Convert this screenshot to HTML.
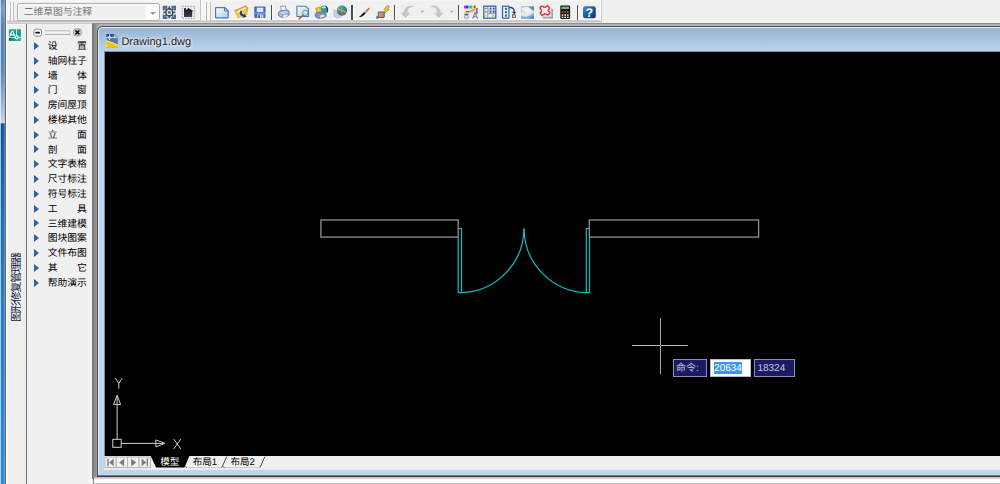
<!DOCTYPE html>
<html lang="zh-CN">
<head>
<meta charset="utf-8">
<title>Drawing1.dwg</title>
<style>
html,body{margin:0;padding:0;}
body{width:1000px;height:484px;overflow:hidden;position:relative;background:#f0f0f0;
 font-family:"Liberation Sans","Noto Sans CJK SC",sans-serif;text-rendering:geometricPrecision;}
.abs{position:absolute;}
#lstrip{left:0;top:0;width:5px;height:484px;background:linear-gradient(#5a84bd,#4f83c2 40%,#2c88ce);}
#lstrip i{position:absolute;left:0;top:0;width:1px;height:484px;background:#b4c8e2;}
#lstrip b{position:absolute;left:4px;top:0;width:1.4px;height:484px;background:#3c4a66;opacity:.85;}
/* toolbar */
#tb{left:5px;top:0;width:597px;height:20px;background:linear-gradient(#f7f7f7,#f1f1f1 2px,#f0f0f0 3px,#f0f0f0 18px,#f6f6f6 19px,#f9f9f9 20px);}
#tbl1{left:5px;top:20px;width:597px;height:2px;background:linear-gradient(#cdcdcd,#cdcdcd 1px,#c6c6c6 1px);}
#tbl2{left:5px;top:22px;width:597px;height:3px;background:linear-gradient(#dcdcdc,#dcdcdc 1px,#cbcbcb 1px,#cbcbcb 2px,#f7f7f7 2px);}
.grip{top:1.500px;width:1px;height:19.500px;background:#bdbdbd;box-shadow:-1.500px 0 0 #fdfdfd;}
.sep{top:5px;width:1.300px;height:14.500px;background:#4e4e4e;box-shadow:1.200px 0 0 #fbfbfb;}
#combo{left:16.500px;top:3.300px;width:143.300px;height:17.900px;box-sizing:border-box;border:1px solid #adadad;border-radius:2.500px;background:linear-gradient(90deg,#f0f0f0 127.300px,#fff 128.300px);box-shadow:inset 0 0 0 1px #fbfbfb;}
#combo span{position:absolute;left:6.300px;top:1.900px;font-size:9.9px;line-height:13px;color:#767676;white-space:nowrap;letter-spacing:-0.15px;}
#combo i{position:absolute;left:132.900px;top:7.300px;width:0;height:0;border-left:3.200px solid transparent;border-right:3.200px solid transparent;border-top:3.800px solid #999;}
/* palette */
#pline{left:26px;top:24px;width:1px;height:460px;background:#6f6f6f;}
#menu{left:27px;top:24px;width:65px;height:460px;background:linear-gradient(90deg,#f0f0f0 61px,#f6f6f6 63px);}
.mi{position:absolute;left:0;width:65px;height:14px;font-size:9.800px;line-height:14px;color:#000;white-space:nowrap;}
.mi s{position:absolute;left:7.300px;top:1.800px;width:0;height:0;border-top:4px solid transparent;border-bottom:4px solid transparent;border-left:5.200px solid #2f62a8;}
.mi span{position:absolute;left:20.700px;top:0;width:39px;text-align:justify;text-align-last:justify;}
/* mdi */
#gstrip{left:92px;top:23.500px;width:7px;height:455px;background:linear-gradient(90deg,#747474,#8a8a8a 2.500px,#a2a2a2 5px,#a2a2a2);}
#gtop{left:92px;top:22.600px;width:908px;height:4px;background:linear-gradient(#909090,#8c8c8c 25%,#b2b2b2 38%,#b4b4b4 60%,#a8a8a8 85%,#8a8a8a);}
#win{left:97px;top:26px;width:920px;height:450px;box-sizing:border-box;border:1px solid #4c5058;border-left-color:#484a4e;border-radius:6px 0 0 0;background:#c1d6ec;overflow:hidden;}
#wtitle{position:absolute;left:0;top:0;width:100%;height:25px;background:linear-gradient(#98b3d3,#a3bddb 35%,#b6ceE8 80%,#bdd4ec);}
#whl{position:absolute;left:0;top:0;width:100%;height:100%;box-sizing:border-box;border-left:1px solid #e4eefa;border-top:1px solid #e0e8f2;border-radius:5px 0 0 0;}
#wtext{left:121.400px;top:35.100px;font-size:11px;line-height:15px;color:#1a1a1a;white-space:nowrap;text-shadow:0 0 3px #fff,0 0 5px #fff;}
#black{left:104.5px;top:51.5px;width:900px;height:404.5px;background:#000;box-shadow:0 0 0 1px #7e8ea3;}
#tabbar{left:104.300px;top:456px;width:900px;height:12.5px;background:#f0f0f0;}
#tabhl{left:104.300px;top:468.5px;width:905px;height:1.5px;background:#e3ecf7;}
#teal{left:97.5px;top:474.6px;width:905px;height:1.5px;background:#1f9db6;}
#dk{left:97px;top:476px;width:910px;height:.6px;background:#3c3c3c;}
#cmdw{left:94px;top:476.600px;width:910px;height:6px;background:linear-gradient(#b4b4b4,#dcdcdc 1.700px,#fff 2.100px);}
#cmdg{left:93.5px;top:482.5px;width:910px;height:2px;background:#c2c2c2;}
#cmdl{left:93px;top:478px;width:1px;height:6px;background:#8a8a8a;}
#vtext{left:11.700px;top:322.400px;width:90px;height:11.600px;font-size:11.200px;line-height:11.600px;color:#16223f;white-space:nowrap;transform-origin:0 0;transform:rotate(-90deg);letter-spacing:-1.400px;}
svg{position:absolute;left:0;top:0;overflow:visible;}
.tabt{font-size:9.500px;line-height:12px;white-space:nowrap;color:#000;}
.dyn{top:359px;height:18px;box-sizing:border-box;font-size:10px;text-rendering:geometricPrecision;line-height:16px;white-space:nowrap;}
</style>
</head>
<body>
<div id="tb" class="abs"></div>
<div id="tbl1" class="abs"></div>
<div id="tbl2" class="abs"></div>
<svg id="lstrip2" width="8" height="484" viewBox="0 0 8 484">
<defs><linearGradient id="gStrip" x1="0" y1="0" x2="0" y2="484" gradientUnits="userSpaceOnUse">
<stop offset="0" stop-color="#5c84ba"/><stop offset=".02" stop-color="#7a9ac8"/><stop offset=".052" stop-color="#5a82b8"/><stop offset=".145" stop-color="#5a82b8"/>
<stop offset=".2" stop-color="#8faad0"/><stop offset=".252" stop-color="#c4d4e6"/><stop offset=".2545" stop-color="#c4d4e6"/><stop offset=".2555" stop-color="#14509a"/>
<stop offset=".41" stop-color="#1d66ae"/><stop offset=".62" stop-color="#2878c2"/><stop offset="1" stop-color="#2b8ad0"/></linearGradient></defs>
<rect x="0" y="0" width="5" height="484" fill="url(#gStrip)"/>
<rect x="0" y="0" width="1" height="484" fill="#ffffff" opacity=".62"/>
<rect x="3.800" y="0" width="1.100" height="484" fill="#ffffff" opacity=".32"/>
<rect x="4.800" y="0" width="1.200" height="484" fill="#5a6c84"/>
<rect x="6" y="0" width="1.200" height="484" fill="#ffffff"/>
</svg>

<!-- toolbar grips and combobox -->
<div class="abs grip" style="left:10px"></div>
<div class="abs grip" style="left:13px"></div>
<div id="combo" class="abs"><span>二维草图与注释</span><i></i></div>
<div class="abs" style="left:200.200px;top:0;width:1px;height:21px;background:#c4c4c4;box-shadow:1.500px 0 0 #fcfcfc;"></div>
<div class="abs grip" style="left:206.200px"></div>
<div class="abs grip" style="left:209.600px"></div>
<div class="abs" style="left:601px;top:0;width:1px;height:21px;background:#c9c9c9;box-shadow:-1px 0 0 #fff;"></div>
<div class="abs sep" style="left:270.8px"></div>
<div class="abs sep" style="left:351.4px"></div>
<div class="abs sep" style="left:393.8px"></div>
<div class="abs sep" style="left:458px"></div>
<div class="abs sep" style="left:576.8px"></div>

<!-- ICONS -->
<svg id="icons" width="1000" height="24" viewBox="0 0 1000 24">
<defs>
<linearGradient id="gNew" x1="0" y1="0" x2="1" y2="1"><stop offset="0" stop-color="#ffffff"/><stop offset="1" stop-color="#a9d0d6"/></linearGradient>
<linearGradient id="gHelp" x1="0" y1="0" x2="1" y2="1"><stop offset="0" stop-color="#4a86c4"/><stop offset=".5" stop-color="#215a9a"/><stop offset="1" stop-color="#0c3468"/></linearGradient>
<linearGradient id="gOr" x1="0" y1="0" x2="1" y2="1"><stop offset="0" stop-color="#ffa070"/><stop offset="1" stop-color="#e86a28"/></linearGradient>
<linearGradient id="gHouse" x1="0" y1="0" x2="0" y2="1"><stop offset="0" stop-color="#15181c"/><stop offset="1" stop-color="#3c4046"/></linearGradient>
<radialGradient id="gGlobe" cx="0.4" cy="0.35" r="0.7"><stop offset="0" stop-color="#58b0e8"/><stop offset="1" stop-color="#1c58a8"/></radialGradient>
</defs>
<!-- workspace gear -->
<g>
<path d="M162.7 5.8h4.6v2.1h-2.5v2.5h-2.1zM171.4 5.8h4.6v4.6h-2.1v-2.5h-2.5zM162.7 14.4h2.1v2.5h2.5v2.1h-4.6zM173.9 14.4h2.1v4.6h-4.6v-2.1h2.5z" fill="#40709f"/>
<g transform="translate(169.300 12.400)">
<g fill="#4a4c4f"><rect x="-.85" y="-6" width="1.700" height="2.600"/><rect x="-.85" y="3.400" width="1.700" height="2.600"/><rect x="-6" y="-.85" width="2.600" height="1.700"/><rect x="3.400" y="-.85" width="2.600" height="1.700"/>
<g transform="rotate(45)"><rect x="-.85" y="-5.800" width="1.700" height="2.400"/><rect x="-.85" y="3.400" width="1.700" height="2.400"/><rect x="-5.800" y="-.85" width="2.400" height="1.700"/><rect x="3.400" y="-.85" width="2.400" height="1.700"/></g></g>
<circle r="3.500" fill="#f4f6f8" stroke="#4a4c4f" stroke-width="1.600"/><circle r="1.700" fill="#4a7ab6"/>
</g>
</g>
<!-- home -->
<g>
<rect x="182.2" y="6.3" width="12.4" height="12.2" fill="#e9eef5" stroke="#8a93a3" stroke-width="0.9" stroke-dasharray="1.4 1.3"/>
<path d="M184 17V8.3h2v1.7l2.5-1.9L193.8 11.2h-1.6V17z" fill="url(#gHouse)"/>
</g>
<!-- new -->
<path d="M216.2 7.6h8.6l3.4 3.2v6.5a.6.6 0 0 1-.6.6h-11.4a.6.6 0 0 1-.6-.6v-9.100a.6.6 0 0 1 .6-.6z" fill="url(#gNew)" stroke="#4a79be" stroke-width="1.2"/>
<path d="M224.6 7.8v3.2h3.4" fill="none" stroke="#4a79be" stroke-width="1"/>
<!-- open -->
<g>
<path d="M234.300 10.200l4.200-1.800 7.500-3.100 2.300 2.700-1.300 6.500-9 3.800-1.700-3.800z" fill="#d7a52a"/>
<path d="M236.500 11.400l9-4.400.8 1.500-9 4.700z" fill="#f3f7fa"/>
<path d="M236.700 13.200l10.100-4.900-.5 6.300-8.300 3.700z" fill="#efc64a"/>
<path d="M240.800 10.600c-1.900 2.300-1 5 2 5.900l-.5 1.300 4.400-1.100-2.700-3.200-.4 1.200c-1.700-.6-2.500-2-1.400-3.700z" fill="#1b3c7a"/>
</g>
<!-- save -->
<g>
<rect x="254.300" y="6.600" width="11.200" height="11.400" rx="1" fill="#3f68c6"/>
<rect x="256.800" y="7.700" width="6.500" height="4.300" fill="#dce9f2"/>
<rect x="255.200" y="12.600" width="9.500" height="1.500" fill="#7f9fe2"/>
<rect x="257.300" y="14.600" width="6" height="3.400" fill="#e8ecf0"/>
<rect x="258.200" y="15.200" width="1.700" height="2.800" fill="#3a4a70"/>
<rect x="261.200" y="15.200" width="1.200" height="2.800" fill="#8a9a5a"/>
</g>
<!-- print -->
<g>
<path d="M280.600 6.400l4.600-.5 1.500 5.400-5.200 1z" fill="#f6f8fc" stroke="#6f7fb0" stroke-width="0.800"/>
<path d="M278.400 13c0-1.300 1.400-2.100 2.900-2.300l5.400-.8c1.500 0 2.500 1 2.500 2.300v2.100c0 1.100-1.100 1.900-2.300 2.100l-4.300.9c-2 .1-4.200-1.100-4.200-2.700z" fill="#8e9bc6" stroke="#5b6aa0" stroke-width="0.700"/>
<path d="M279 12.600l3.400 1.900 6.300-1.700-2-1.700-5.200.6z" fill="#c9d1e8"/>
<ellipse cx="285.300" cy="15.800" rx="2.500" ry="1.200" fill="#eef1f8" transform="rotate(-14 285.300 15.800)"/>
<path d="M279.300 14.600l2.800 1.700" stroke="#dfe4f2" stroke-width="0.800"/>
</g>
<!-- preview -->
<g>
<path d="M296.900 6.200h8.800l2.800 2.600v7.700h-11.600z" fill="url(#gNew)" stroke="#4a79be" stroke-width="1.100"/>
<circle cx="305.200" cy="12.800" r="2.700" fill="#cfe4f8" stroke="#6f8fb8" stroke-width="1"/>
<path d="M303.400 15l-4.100 3.700" stroke="#b0651d" stroke-width="1.600" stroke-linecap="round"/>
</g>
<!-- publish -->
<g>
<circle cx="324.300" cy="9.300" r="3.700" fill="#2f9f9a"/>
<path d="M321.500 7.500c2-1.800 4.500-1.500 6 0-1 .6-2 1-3.200.6-1 .5-1.800.5-2.800-.6z" fill="#b9e6ef"/>
<path d="M325.500 6.200c2.200 1.400 2.800 4.200 1.400 6.300" stroke="#1d4048" stroke-width="1.200" fill="none"/>
<path d="M315.600 8.200l5-1.400 1.400 5.400-5 1.400z" fill="#e3b322" stroke="#b98d16" stroke-width="0.5"/>
<path d="M317.800 8.800l1.600 1.200-.8 1.400" stroke="#fff6c8" stroke-width="0.800" fill="none"/>
<path d="M315.200 14.400c0-1.400 1.500-2 3-2l5.400-.4c1.500 0 2.500.9 2.500 2.100v1.600c0 1.100-1.100 1.800-2.300 2l-4.300.7c-2 0-4.300-1-4.300-2.500z" fill="#8190bd" stroke="#56669c" stroke-width="0.700"/>
<ellipse cx="322" cy="16.200" rx="2.500" ry="1.200" fill="#e6eaf4" transform="rotate(-12 322 16.200)"/>
</g>
<!-- 3d dwf -->
<g>
<path d="M333.800 9.800l3.600 1.200v5l4.800-2.200 1 1.400-5.800 3.200-3.600-2.200z" fill="#c4d3ea" stroke="#9fb2d2" stroke-width="0.5"/>
<circle cx="342" cy="10.600" r="5" fill="url(#gGlobe)"/>
<path d="M339 7.400c1.600-.8 3.600-.2 4.200 1.200.6 1.600-.6 3.400-2.400 3.600-1.600.2-2.800-1-3-2.400z" fill="#37a565"/>
<path d="M343.500 12.500l2.500-1.200-.6 2.800-1.800 1z" fill="#37a565"/>
<path d="M337.400 8.600L346.600 12.400" stroke="#e3c928" stroke-width="0.900"/>
<path d="M340.400 6L342.600 15.400" stroke="#d8a030" stroke-width="0.700"/>
<path d="M337.200 12.600c3 1.300 6.400 .9 9.400-1.300" stroke="#d8453a" stroke-width="0.800" fill="none"/>
</g>
<!-- brush -->
<g>
<path d="M358.600 16.800c1.400-.2 2.200-1.200 3-2.200l2.600-2.800 1.600 1.600-2.600 2.400c-1.400 1.200-3 1.600-4.600 1z" fill="#17181a"/>
<path d="M364.200 11.800l1.100-1.100 1.600 1.600-1.100 1.100z" fill="#aeb3ba"/>
<path d="M365.300 10.700l3.300-2.900c.8-.4 1.400.4 1 1l-2.700 3.500z" fill="#c97a3a"/>
</g>
<!-- block editor -->
<g>
<path d="M387.300 5.500l2.200.9-2 2.500 1.700.5-4.700 4-.9-.8 2-2.600-1.700-.5z" fill="#ead528" stroke="#8f6f22" stroke-width="0.600"/>
<rect x="378.200" y="12" width="6" height="5.500" rx=".5" fill="url(#gOr)" stroke="#1f5fc0" stroke-width="1"/>
<circle cx="377.300" cy="17.500" r="1.300" fill="#1f6fd6"/>
</g>
<!-- undo / redo -->
<g fill="#c6c6c6">
<path d="M405.600 18.200l-4.800-5.400h2.700c.4-3.800 2.700-6.600 6.100-7 1.900-.2 3.500.3 4.800 1.400-2.700-.5-5 .1-6.100 2-.7 1.100-.9 2.300-.9 3.600h2.900z"/>
<path d="M438.800 18.200l4.800-5.400h-2.700c-.4-3.800-2.700-6.600-6.100-7-1.900-.2-3.500.3-4.800 1.400 2.700-.5 5 .1 6.100 2 .7 1.100.9 2.300.9 3.600h-2.900z"/>
</g>
<g fill="#a6a6c4">
<path d="M420.600 10.800h3.800l-1.900 1.900z"/>
<path d="M449.900 10.800h3.800l-1.900 1.900z"/>
</g>
<!-- match prop -->
<g>
<rect x="464" y="5.600" width="2" height="2.900" fill="#f01ee6"/>
<rect x="466" y="5.600" width="2" height="2.900" fill="#3030f0"/>
<rect x="468" y="5.600" width="2" height="2.900" fill="#20d0e8"/>
<rect x="470" y="5.600" width="2" height="2.900" fill="#28d838"/>
<rect x="472" y="5.600" width="1.800" height="2.900" fill="#f0e020"/>
<rect x="473.800" y="5.600" width="1.800" height="2.900" fill="#f03020"/>
<rect x="464.400" y="9.600" width="4" height="3.400" fill="#e9e18a"/>
<rect x="464.400" y="13.600" width="4" height="1.600" fill="#4d66a8"/>
<rect x="464.800" y="15.800" width="3.400" height="2.400" fill="#dfe3ec" stroke="#6e7fa8" stroke-width="0.600"/>
<path d="M467.400 11.600l4.800-2.600 3-.8.600 2-2.600 1.600-4.600 1.400z" fill="#e6a3a3"/>
<path d="M466 12l3.200-.6" stroke="#4a4a5a" stroke-width="1"/>
<rect x="476.200" y="8" width="1.400" height="6.200" fill="#3d66b4"/>
<path d="M472.600 18.700l2.500-6 2.500 6M473.600 16.700h3" fill="none" stroke="#7e8288" stroke-width="1.100"/>
</g>
<!-- properties -->
<g>
<rect x="483.800" y="6.200" width="12" height="12" fill="#eef2f8" stroke="#3a64b0" stroke-width="1.300"/>
<path d="M487.800 6.200v12M487.800 10.200h8M487.800 13.600h8" stroke="#5b7fc0" stroke-width="0.700"/>
<g fill="#e6d23a"><rect x="484.900" y="7.400" width="2" height="2"/><rect x="484.900" y="10.800" width="2" height="2"/><rect x="484.900" y="14.400" width="2" height="2"/><rect x="491.600" y="14.600" width="3" height="2.600"/></g>
<g fill="#27508f"><rect x="489.600" y="7.600" width="1.800" height="1.800"/><rect x="492.800" y="7.600" width="1.800" height="1.800"/><rect x="489.600" y="11" width="1.800" height="1.800"/><rect x="492.800" y="11" width="1.800" height="1.800"/><rect x="485.500" y="8" width="1" height="1"/><rect x="485.500" y="11.400" width="1" height="1"/></g>
</g>
<!-- design center -->
<g>
<rect x="502.500" y="6.200" width="6.400" height="12" fill="#e6edf6" stroke="#3a64b0" stroke-width="1.200"/>
<g fill="#2a6a9a"><rect x="505" y="7.800" width="2" height="2"/><rect x="505" y="11.200" width="2" height="2"/><rect x="505" y="14.600" width="2" height="2"/></g>
<path d="M509.200 7.600c3.400-.6 5.200 1.600 5 4.600" fill="none" stroke="#1c3f80" stroke-width="1.300"/>
<path d="M512 11.800h4.400l-2.200 2.600z" fill="#1c3f80"/>
<rect x="512.600" y="14.800" width="2.800" height="2.800" fill="#ece04a" stroke="#3a3f50" stroke-width="0.700"/>
</g>
<!-- tool palettes -->
<g>
<rect x="521.200" y="6.400" width="12.800" height="12.400" fill="#4b8fc2"/>
<path d="M521.200 6.400h7l5.800 4.600v4l-7.800 3.800h-5z" fill="#d7dadd"/>
<path d="M521.200 8.400l5.400-1.600 6 4.400-5.600 2z" fill="#f1f2f3"/>
<path d="M521.200 12.400l6 .8 4-1.400 1 1.600-6 3-5-.8z" fill="#e6e8ea"/>
<path d="M521.200 16l5 1 7.800-3.800v2.200l-7 3.400h-5.800z" fill="#7fb2d6"/>
</g>
<!-- sheet set -->
<g>
<path d="M543 9h10v9.600h-10z" fill="#9da1a6"/>
<path d="M541.800 8h10v9.400h-10z" fill="#c3c7cc"/>
<path d="M540.600 7h10v9.400h-10z" fill="#d5e3f2"/>
<path d="M541.600 5.900l3.200 1.600 2.600-1.900 2.200 2.200-1.500 2.700 1.900 2.400-2.100 2.200-3-1.400-2.600 1.700-2.100-2.200 1.500-2.600-1.800-2.600z" fill="#eef4fb" stroke="#e63c3c" stroke-width="1.500" stroke-linejoin="round"/>
</g>
<!-- calculator -->
<g>
<rect x="560.300" y="5.600" width="9.800" height="13.300" rx=".8" fill="#111"/>
<rect x="561.400" y="6.600" width="7.600" height="2.500" fill="#76b476"/>
<g fill="#e53030"><rect x="561.600" y="11.200" width="1.700" height="1.800"/><rect x="564.300" y="11.200" width="1.700" height="1.800"/><rect x="567" y="11.200" width="1.700" height="1.800"/></g>
<g fill="#e4e4e4"><rect x="561.600" y="14.200" width="1.700" height="1.600"/><rect x="564.300" y="14.200" width="1.700" height="1.600"/><rect x="567" y="14.200" width="1.700" height="1.600"/><rect x="561.600" y="16.600" width="1.700" height="1.500"/><rect x="564.300" y="16.600" width="1.700" height="1.500"/><rect x="567" y="16.600" width="1.700" height="1.500"/></g>
</g>
<!-- help -->
<g>
<rect x="583" y="6.300" width="12.800" height="12" rx="2.200" fill="url(#gHelp)"/>
<text x="589.300" y="17" font-family="Liberation Sans, sans-serif" font-weight="bold" font-size="12.600" fill="#f4f8fc" text-anchor="middle">?</text>
</g>
</svg>

<!-- palette -->
<div id="pline" class="abs"></div>
<div id="menu" class="abs">
<div class="mi" style="top:16px"><s></s><span>设置</span></div>
<div class="mi" style="top:30.8px"><s></s><span>轴网柱子</span></div>
<div class="mi" style="top:45.6px"><s></s><span>墙体</span></div>
<div class="mi" style="top:60.4px"><s></s><span>门窗</span></div>
<div class="mi" style="top:75.2px"><s></s><span>房间屋顶</span></div>
<div class="mi" style="top:90px"><s></s><span>楼梯其他</span></div>
<div class="mi" style="top:104.8px"><s></s><span>立面</span></div>
<div class="mi" style="top:119.6px"><s></s><span>剖面</span></div>
<div class="mi" style="top:134.4px"><s></s><span>文字表格</span></div>
<div class="mi" style="top:149.2px"><s></s><span>尺寸标注</span></div>
<div class="mi" style="top:164px"><s></s><span>符号标注</span></div>
<div class="mi" style="top:178.8px"><s></s><span>工具</span></div>
<div class="mi" style="top:193.6px"><s></s><span>三维建模</span></div>
<div class="mi" style="top:208.4px"><s></s><span>图块图案</span></div>
<div class="mi" style="top:223.2px"><s></s><span>文件布图</span></div>
<div class="mi" style="top:238px"><s></s><span>其它</span></div>
<div class="mi" style="top:252.8px"><s></s><span>帮助演示</span></div>
</div>
<div id="vtext" class="abs">图形修复管理器</div>

<!-- MDI -->
<div id="gtop" class="abs"></div>
<div id="gstrip" class="abs"></div>
<div id="win" class="abs"><div id="wtitle"></div><div id="whl"></div></div>
<div id="wtext" class="abs">Drawing1.dwg</div>
<div id="black" class="abs"></div>
<div id="tabbar" class="abs"></div>
<div id="tabhl" class="abs"></div>
<div id="teal" class="abs"></div>
<div id="dk" class="abs"></div>
<div id="cmdw" class="abs"></div>
<div id="cmdg" class="abs"></div>
<div id="cmdl" class="abs"></div>

<!-- palette header + icons -->
<svg id="pal" width="100" height="60" viewBox="0 0 100 60">
<defs><linearGradient id="gTeal" x1="0" y1="0" x2="1" y2="1"><stop offset="0" stop-color="#27b3a1"/><stop offset=".55" stop-color="#0f9a8c"/><stop offset="1" stop-color="#2cb5a6"/></linearGradient></defs>
<rect x="8.900" y="29.300" width="12" height="11.700" fill="url(#gTeal)"/>
<path d="M9 37.800l3.400-2 .3 1.700-3.500 3z" fill="#0c4f48"/>
<path d="M10.600 30.400l2-.6 1 1.400-2.400 1.200z" fill="#0b5148"/><path d="M9.800 36.400l2.100-5.300h.9l2.100 5.300M10.500 34.800h3.400" fill="none" stroke="#f2fbfa" stroke-width="1.200"/>
<path d="M16.600 29.300v6.400M9 37.600h6M18.300 37.600h2.600" stroke="#eaf7f5" stroke-width="0.900" fill="none"/>
<circle cx="16.700" cy="37.300" r="1.500" fill="#1d9c8e" stroke="#ffffff" stroke-width="1.200"/>
<rect x="33.900" y="29.200" width="7.600" height="7" rx="2" fill="#fafafa" stroke="#8b8b8b" stroke-width="1"/>
<rect x="35.300" y="31.800" width="4.600" height="1.700" rx=".6" fill="#111"/>
<path d="M45 31h25M45 34.800h25" stroke="#9c9c9c" stroke-width="1.100"/>
<path d="M45 31.900h25M45 35.700h25" stroke="#fdfdfd" stroke-width="0.900"/>
<path d="M70 30.200v6" stroke="#c4c4c4" stroke-width="0.800"/>
<rect x="73.600" y="28.900" width="7.600" height="7" rx="2.200" fill="#d6d6d6" stroke="#9a9a9a" stroke-width="1"/>
<path d="M75.400 30.400l4 4M79.400 30.400l-4 4" stroke="#111" stroke-width="1.500"/>
<!-- drawing icon in title -->
<g>
<path d="M106.600 34.200h7.200l4 3.800v9.600h-11.200z" fill="#5478ac"/>
<path d="M106.600 34.200h7.200l4 3.800v-.4l-2 -1.200h-9.200z" fill="#1d4c8a"/><path d="M106.600 34.200h5.400v3h-5.400z" fill="#1d4c8a"/>
<path d="M113.600 34.400l4.200 3.800h-3.600z" fill="#b9cce4"/>
<path d="M106.200 40l12 4.600v3.100h-12z" fill="#f1c616"/>
<path d="M106.200 40l12 4.600v.9l-11.200-4.100v5.800h-.8z" fill="#f8e070"/>
<path d="M106.600 37.300h8.200M109.500 34.400v5.600" stroke="#ffffff" stroke-width="0.800"/>
<circle cx="109.500" cy="37.300" r="1.200" fill="#fff"/><circle cx="109.500" cy="37.300" r=".5" fill="#9fb6d6"/>
</g>
</svg>
<!-- DRAWING -->
<svg id="dwg" width="1000" height="484" viewBox="0 0 1000 484">
<g fill="none" stroke="#969696" stroke-width="1.250">
<rect x="320.900" y="219.950" width="137.250" height="17.150"/>
<rect x="589.300" y="219.950" width="169.300" height="17.150"/>
</g>
<g fill="none" stroke="#11bac2" stroke-width="1.200">
<path d="M458.200 237.200V292.700H461.500V228.600H458.700"/>
<path d="M461.500 292.700A64.300 64.300 0 0 0 523.800 228.400"/>
<path d="M589.500 237.200V292.700H586.300V228.600H589"/>
<path d="M586.300 292.700A64.300 64.300 0 0 1 524.100 228.400"/>
</g>
<!-- crosshair -->
<g stroke-width="1" fill="none">
<path d="M660.500 318V374.200" stroke="#a9a9a9"/><path d="M632 345.500H687.800" stroke="#b6b6b6"/>
<rect x="660" y="345" width="1" height="1" fill="#6e6e6e" stroke="none"/>
</g>
<!-- UCS icon -->
<g stroke="#d2d2d2" stroke-width="1" fill="none">
<rect x="112.8" y="439.3" width="8.4" height="8"/>
<path d="M117.100 439.300V396.500M113.600 404.400H120.600L117.100 395.200Z"/>
<path d="M121.200 443.400H163.500M155.800 439.900V446.800L165 443.400Z"/>
<path d="M115.3 378L118.8 383.4L122.3 378M118.8 383.4V388.6"/>
<path d="M173.6 439L180.8 449M180.8 439L173.6 449"/>
</g>
<!-- tab strip -->
<g>
<g fill="#f3f3f3" stroke="#b3b3b3" stroke-width="1">
<rect x="104.900" y="457" width="11.300" height="10.600"/>
<rect x="116.200" y="457" width="11.400" height="10.600"/>
<rect x="127.600" y="457" width="11.400" height="10.600"/>
<rect x="139" y="457" width="11.400" height="10.600"/>
</g>
<g fill="#7c7c7c" stroke="none">
<path d="M107.300 458.600H108.700V466.200H107.300ZM109.100 462.400L113.700 458.600V466.200Z"/>
<path d="M119.200 462.400L124.200 458.400V466.400Z"/>
<path d="M136.200 462.400L131.200 458.400V466.400Z"/>
<path d="M148 458.600H146.600V466.200H148ZM146.200 462.400L141.600 458.600V466.200Z"/>
</g>
<path d="M150.800 456H189.400L184.400 467.400H156Z" fill="#000"/>
<g stroke="#c9c9c9" stroke-width="1" fill="none">
<path d="M186 467.600H221.600M224 467.600H259.800"/>
</g>
<g stroke="#4c4c4c" stroke-width="1" fill="none">
<path d="M185.400 466.200L186.600 467.700M221.700 467.700L226.700 456.600M223 466.200L224.200 467.700M259.900 467.700L264.900 456.600"/>
</g>
</g>
</svg>
<div class="abs tabt" style="left:160.300px;top:456.700px;color:#fff;">模型</div>
<div class="abs tabt" style="left:192.800px;top:456.700px;">布局1</div>
<div class="abs tabt" style="left:230.600px;top:456.700px;">布局2</div>
<div class="abs dyn" style="left:673px;width:34.4px;background:#1b1b63;border:1px solid #8d8db4;color:#c6c6de;"><span style="position:absolute;left:2px;top:1.200px">命令:</span></div>
<div class="abs dyn" style="left:710px;width:41.4px;background:#fff;border:1px solid #b8b8c8;"><span style="position:absolute;display:block;left:2.600px;top:1.700px;height:12.400px;line-height:13.400px;background:#3a96ff;color:#fff;padding:0 0.5px;">20634</span></div>
<div class="abs dyn" style="left:753.6px;width:41.6px;background:#1b1b63;border:1px solid #8d8db4;color:#c6c6de;"><span style="position:absolute;left:2.800px;top:1.200px">18324</span></div>


</body>
</html>
